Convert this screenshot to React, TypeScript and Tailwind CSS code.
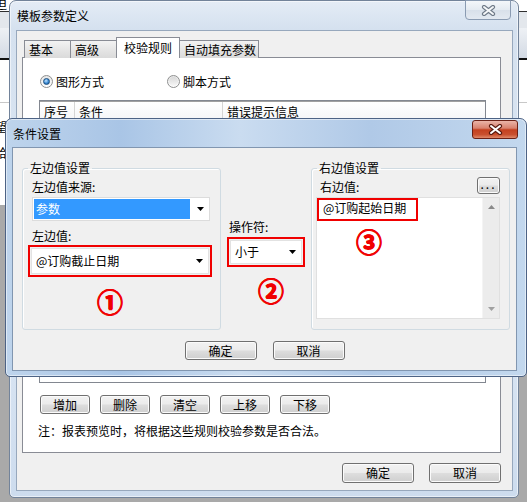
import React from 'react';

const FONT = "font-['Noto_Sans_CJK_SC','Liberation_Sans',sans-serif]";

function WinButton({ label, className = '' }: { label: string; className?: string }) {
  return (
    <div
      className={`flex items-center justify-center rounded-[3px] border border-[#707070] bg-[linear-gradient(#f2f2f2,#ebebeb_48%,#dddddd_52%,#cfcfcf)] text-[12px] leading-none text-black shadow-[inset_0_0_0_1px_#fbfbfb] ${className}`}
    >
      {label}
    </div>
  );
}

function ArrowDown({ color = '#000' }: { color?: string }) {
  return (
    <svg width="7" height="4" viewBox="0 0 7 4">
      <path d="M0 0h7L3.5 4z" fill={color} />
    </svg>
  );
}

function ArrowUp({ color = '#8a8a8a' }: { color?: string }) {
  return (
    <svg width="7" height="4" viewBox="0 0 7 4">
      <path d="M0 4h7L3.5 0z" fill={color} />
    </svg>
  );
}

function CloseGlyph({ dark = '#3b3b3b', light = '#ffffff' }: { dark?: string; light?: string }) {
  return (
    <svg width="15" height="11" viewBox="0 0 15 11">
      <path d="M3 2l9 7M12 2l-9 7" stroke={dark} strokeWidth="4.2" strokeLinecap="round" />
      <path d="M3 2l9 7M12 2l-9 7" stroke={light} strokeWidth="2" strokeLinecap="round" />
    </svg>
  );
}

function Radio({ checked }: { checked?: boolean }) {
  return (
    <div className="flex h-[13px] w-[13px] items-center justify-center rounded-full border border-[#8e8f8f] bg-[linear-gradient(#e6e6e6,#ffffff)]">
      {checked ? (
        <div className="h-[7px] w-[7px] rounded-full border border-[#1b4f80] bg-[radial-gradient(circle_at_40%_35%,#c3e4ff,#3a8ad4_55%,#0f4e8f)]" />
      ) : (
        <div className="h-[9px] w-[9px] rounded-full bg-[linear-gradient(#d8d8d8,#f7f7f7)]" />
      )}
    </div>
  );
}

function Tab({ label, w, active }: { label: string; w: string; active?: boolean }) {
  return (
    <div
      className={`relative flex items-center border border-[#898c95] text-[12px] leading-none ${w} ${
        active
          ? 'z-10 h-[21px] border-b-0 bg-white pl-[7px]'
          : 'h-[18px] border-b-0 bg-[linear-gradient(#f3f3f3,#e6e6e6_50%,#dadada)] pl-[4px]'
      }`}
    >
      {label}
    </div>
  );
}

function Desktop() {
  // part of another window that sits behind both dialogs
  return (
    <div className="absolute left-0 top-0 flex h-[205px] w-[527px] flex-col bg-white">
      <div className="h-[12px] border-b border-[#2f2f2f] text-[12px] leading-[12px]">
        <div className="-ml-[5px] -mt-[2px]">迫</div>
      </div>
      <div className="h-[16px] bg-[#e3e7ec]" />
      <div className="h-[30px] bg-[linear-gradient(#eef1f5,#d3dae4)]" />
      <div className="h-[2px] bg-[#111]" />
      <div className="flex flex-1 flex-col text-[12px] leading-[14px]">
        <div className="mt-[42px] h-px w-full bg-[#c8c8c8]" />
        <div className="-ml-[5px] mt-[17px]">望</div>
        <div className="-ml-[5px] mt-[12px]">给</div>
      </div>
    </div>
  );
}

function MainWindow() {
  const tools = ['增加', '删除', '清空', '上移', '下移'];
  return (
    <div className="absolute left-[9px] top-0 flex h-[498px] w-[510px] flex-col rounded-t-[7px] rounded-b-[5px] border border-[#72839a] bg-[linear-gradient(#e4ecf6,#d5e1ef_28px,#dce7f4_60%,#cddcee)] shadow-[inset_0_0_0_1px_rgba(255,255,255,0.55)]">
      <div className="flex h-[29px] items-start justify-between pl-[7px] pr-[7px]">
        <span className="mt-[8px] text-[12px] leading-[14px]">模板参数定义</span>
        <div className="-mt-px flex h-[20px] w-[46px] items-center justify-center rounded-b-[4px] border border-[#8a9bb2] bg-[linear-gradient(#f4f7fa,#e4eaf1_50%,#d8e0ea_50%,#e3e9f1)]">
          <CloseGlyph dark="#6f7a88" light="#f4f6f8" />
        </div>
      </div>
      <div className="mb-[6px] ml-[6px] mr-[5px] flex flex-1 flex-col border border-[#97a8bd] bg-[#f0f0f0] pl-[5px] pr-[11px] pt-[6px] pb-[7px]">
        <div className="ml-[2px] flex h-[21px] items-end">
          <Tab label="基本" w="w-[47px]" />
          <Tab label="高级" w="w-[47px] -ml-px" />
          <Tab label="校验规则" w="w-[64px] -ml-px" active />
          <Tab label="自动填充参数" w="w-[80px] -ml-px" />
        </div>
        <div className="-mt-px flex flex-1 flex-col border border-[#898c95] bg-white">
          <div className="ml-[17px] mt-[17px] flex h-[13px] items-center text-[12px] leading-none">
            <div className="flex w-[127px] items-center gap-[3px]">
              <Radio checked />
              <span>图形方式</span>
            </div>
            <div className="flex items-center gap-[3px]">
              <Radio />
              <span>脚本方式</span>
            </div>
          </div>
          <div className="ml-[16px] mt-[12px] flex h-[283px] w-[447px] flex-col border border-[#828790] bg-white">
            <div className="flex h-[21px] border-t border-[#a0a0a0] bg-[linear-gradient(#ffffff,#f3f4f6)] text-[12px] leading-none">
              <div className="flex w-[35px] items-center border-r border-[#d5d5d5] pl-[4px]">序号</div>
              <div className="flex w-[148px] items-center border-r border-[#d5d5d5] pl-[4px]">条件</div>
              <div className="flex flex-1 items-center pl-[4px]">错误提示信息</div>
            </div>
          </div>
          <div className="ml-[17px] mt-[12px] flex gap-[10px]">
            {tools.map((t) => (
              <WinButton key={t} label={t} className="h-[19px] w-[50px]" />
            ))}
          </div>
          <div className="ml-[15px] mt-[10px] text-[12px] leading-[14px]">注：报表预览时，将根据这些规则校验参数是否合法。</div>
        </div>
        <div className="mt-[10px] flex justify-end gap-[15px]">
          <WinButton label="确定" className="h-[20px] w-[72px]" />
          <WinButton label="取消" className="h-[20px] w-[72px]" />
        </div>
      </div>
    </div>
  );
}

function Circled({ n }: { n: string }) {
  return (
    <div className="text-[26px] font-bold leading-[26px] text-[#f00000] [text-shadow:0.6px_0_0_#f00000,-0.6px_0_0_#f00000,0_0.6px_0_#f00000]">
      {n}
    </div>
  );
}

function ConditionDialog() {
  return (
    <div className="absolute left-[5px] top-[118px] flex h-[259px] w-[522px] flex-col rounded-t-[7px] rounded-b-[5px] border border-[#4d6385] bg-[linear-gradient(to_right,#bed4ec,#a9c5e6_22%,#cadcf0_45%,#b0c9e7_70%,#c3d8ee)] shadow-[inset_0_0_0_1px_rgba(255,255,255,0.5)]">
      <div className="flex h-[28px] items-start justify-between pl-[7px] pr-[8px]">
        <span className="mt-[8px] text-[12px] leading-[14px]">条件设置</span>
        <div className="mt-px flex h-[19px] w-[46px] items-center justify-center rounded-[3px] border border-[#6b2015] bg-[linear-gradient(#eab4a8,#d9826f_42%,#c4401f_52%,#c9502f_80%,#e0896a)]">
          <CloseGlyph dark="#5a1a10" />
        </div>
      </div>
      <div className="mb-[5px] ml-[6px] mr-[9px] flex flex-1 flex-col border border-[#8196b0] bg-[#f0f0f0]">
        <div className="ml-[9px] mt-[13px] flex gap-[6px]">
          <fieldset className="h-[169px] w-[199px] rounded-[3px] border border-[#d0dbe2] pl-[9px] shadow-[inset_1px_1px_0_#fff]">
            <legend className="-ml-[4px] px-[2px] text-[12px] leading-[14px]">左边值设置</legend>
            <div className="mt-[5px] text-[12px] leading-[14px]">左边值来源:</div>
            <div className="mt-[3px] flex h-[24px] w-[178px] items-center border border-[#dcdcdc] bg-white pl-px pr-[5px]">
              <div className="mr-[7px] flex h-[20px] flex-1 items-center bg-[#3399ff] pl-[2px] text-[12px] text-white">参数</div>
              <ArrowDown />
            </div>
            <div className="mt-[8px] text-[12px] leading-[14px]">左边值:</div>
            <div className="-ml-[4px] mt-[2px] w-[184px] border-2 border-[#f00000] p-px">
              <div className="flex h-[26px] items-center border border-[#e2e2e2] bg-white pl-[4px] pr-[5px] text-[12px]">
                <span className="flex-1">@订购截止日期</span>
                <ArrowDown />
              </div>
            </div>
            <div className="ml-[65px] mt-[11px]">
              <Circled n="①" />
            </div>
          </fieldset>
          <div className="flex w-[78px] flex-col">
            <div className="ml-[2px] mt-[59px] text-[12px] leading-[14px]">操作符:</div>
            <div className="mt-[3px] border-2 border-[#f00000] p-px">
              <div className="flex h-[24px] items-center border border-[#e2e2e2] bg-white pl-[4px] pr-[5px] text-[12px]">
                <span className="flex-1">小于</span>
                <ArrowDown />
              </div>
            </div>
            <div className="ml-[31px] mt-[10px]">
              <Circled n="②" />
            </div>
          </div>
          <fieldset className="h-[169px] w-[199px] rounded-[3px] border border-[#d0dbe2] pl-[9px] pr-[9px] shadow-[inset_1px_1px_0_#fff]">
            <legend className="-ml-[4px] px-[2px] text-[12px] leading-[14px]">右边值设置</legend>
            <div className="mt-[2px] flex items-end justify-between">
              <span className="-ml-px text-[12px] leading-[14px]">右边值:</span>
              <WinButton label="..." className="h-[17px] w-[23px] pb-[4px] tracking-[2px]" />
            </div>
            <div className="relative -ml-[5px] mt-[3px] flex h-[122px] w-[184px] border border-[#e0e0e0] bg-white">
              <div className="flex-1 pl-[6px] pt-[3px] text-[12px] leading-[14px]">@订购起始日期</div>
              <div className="flex w-[17px] flex-col items-center justify-between border-l border-[#f4f4f4] bg-[#ececec] py-[7px]">
                <ArrowUp />
                <ArrowDown color="#a0a0a0" />
              </div>
              <div className="absolute left-0 top-0 h-[23px] w-[101px] border-2 border-[#f00000]" />
              <div className="absolute left-[39px] top-[30px]">
                <Circled n="③" />
              </div>
            </div>
          </fieldset>
        </div>
        <div className="mt-[11px] flex justify-center gap-[16px]">
          <WinButton label="确定" className="h-[19px] w-[72px]" />
          <WinButton label="取消" className="h-[19px] w-[72px]" />
        </div>
      </div>
    </div>
  );
}

export default function App() {
  return (
    <div className={`relative h-[502px] w-[527px] overflow-hidden bg-[#a9a9a9] text-[12px] text-black ${FONT}`}>
      <Desktop />
      <MainWindow />
      <ConditionDialog />
    </div>
  );
}
